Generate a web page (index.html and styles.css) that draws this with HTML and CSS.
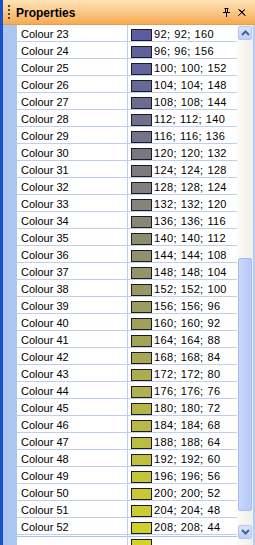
FILE: index.html
```html
<!DOCTYPE html>
<html>
<head>
<meta charset="utf-8">
<link rel="stylesheet" href="styles.css">
</head>
<body>
<div class="panel">
  <div class="titlebar">
    <span class="grip"></span>
    <span class="title">Properties</span>
    <svg class="pin" width="7" height="9" viewBox="0 0 7 9"><path d="M1.5 0.5h4M2.5 0.5v4M4.5 0.5v4M0 4.5h7M3.5 4.5v4.5" stroke="#000" stroke-width="1" fill="none"/><rect x="2" y="0" width="1" height="5" fill="#000"/></svg>
    <svg class="close" width="8" height="7" viewBox="0 0 8 7"><path d="M0.5 0.5l6.5 6M1.5 0.5l6 6M7 0.5l-6.5 6M6.5 0.5l-6 6" stroke="#000" stroke-width="1" fill="none"/></svg>
  </div>
  <div class="body">
    <div class="grid" id="grid"></div>
    <div class="scrollbar">
      <div class="sbtn up"><svg width="9" height="6" viewBox="0 0 9 6"><path d="M1 5L4.5 1.5L8 5" stroke="#4d6185" stroke-width="2" fill="none"/></svg></div>
      <div class="track"><div class="thumb"></div></div>
      <div class="sbtn down"><svg width="9" height="6" viewBox="0 0 9 6"><path d="M1 1L4.5 4.5L8 1" stroke="#4d6185" stroke-width="2" fill="none"/></svg></div>
    </div>
  </div>
</div>
<script src="app.js"></script>
</body>
</html>
```

FILE: app.js
```js
var g = document.getElementById('grid');
var html = '';
for (var n = 23; n <= 52; n++) {
  var k = n - 23;
  var r = 92 + 4 * k, b = 160 - 4 * k;
  html += '<div class="row"><div class="margin"></div><div class="name">Colour ' + n + '</div><div class="value"><span class="swatch" style="background: rgb(' + r + ',' + r + ',' + b + ')"></span><span class="vtext">' + r + '; ' + r + '; ' + b + '</span></div></div>';
}
html += '<div class="row partial"><div class="margin"></div><div class="name"></div><div class="value"><span class="swatch" style="background: rgb(212,212,40)"></span></div></div>';
g.innerHTML = html;
```

FILE: styles.css
```css
html, body {
  margin: 0;
  padding: 0;
  width: 255px;
  height: 545px;
  overflow: hidden;
  background: #fff;
}
.panel {
  width: 255px;
  height: 545px;
  display: flex;
  flex-direction: column;
  border-left: 3px solid #1c50c8;
  box-sizing: border-box;
  font-family: "Liberation Sans", Arial, sans-serif;
  font-size: 11px;
  color: #000;
}
.titlebar {
  height: 25px;
  flex: none;
  display: flex;
  align-items: center;
  background: linear-gradient(to bottom, #fde4b8 0%, #fbca8c 45%, #f6ab52 100%);
  border-bottom: 1px solid #e39c50;
  box-sizing: border-box;
}
.grip {
  width: 2px;
  height: 14px;
  margin-left: 5px;
  margin-right: 6px;
  background: repeating-linear-gradient(to bottom, #5a4a2e 0 2px, transparent 2px 4px);
}
.title {
  font-weight: bold;
  font-size: 12px;
  flex: 1;
  padding-top: 1px;
  color: #000;
}
.pin { margin-right: 8px; }
.close { margin-right: 9px; }
.body {
  flex: 1;
  display: flex;
  min-height: 0;
  border-right: 2px solid #b6c9ee;
}
.grid {
  flex: 1;
  overflow: hidden;
  background: #fff;
}
.row {
  display: flex;
  height: 17px;
}
.margin {
  width: 14px;
  flex: none;
  background: #a9c7f1;
}
.name {
  width: 106px;
  flex: none;
  padding-left: 4px;
  border-right: 1px solid #c0cfe8;
  border-bottom: 1px solid #c0cfe8;
  line-height: 17px;
  padding-top: 1px;
  height: 15px;
  overflow: hidden;
  white-space: nowrap;
}
.value {
  flex: 1;
  display: flex;
  align-items: flex-start;
  border-bottom: 1px solid #c0cfe8;
  height: 16px;
  white-space: nowrap;
}
.swatch {
  width: 19px;
  height: 10px;
  border: 1px solid #1a1a2a;
  margin-left: 3px;
  margin-top: 4px;
  flex: none;
}
.vtext {
  margin-left: 2px;
  line-height: 17px;
  padding-top: 1px;
  letter-spacing: 0.35px;
  word-spacing: 0.5px;
}
.row.partial {
  box-shadow: inset 0 3px 0 -2px #fff, inset 0 4px 0 -2px #a9c3ec;
}
.scrollbar {
  width: 16px;
  flex: none;
  display: flex;
  flex-direction: column;
  background: linear-gradient(to right, #fbfbf7, #f1efe6);
  padding: 1px 0 6px 1px;
  box-sizing: border-box;
}
.sbtn {
  height: 14px;
  width: 14px;
  flex: none;
  border: 1px solid #b4c7f2;
  border-radius: 2px;
  background: linear-gradient(to bottom, #dae5fd, #bccffa);
  box-sizing: border-box;
  display: flex;
  align-items: center;
  justify-content: center;
}
.sbtn.down { margin-top: 2px; }
.track {
  flex: 1;
  position: relative;
}
.thumb {
  position: absolute;
  left: 0;
  width: 14px;
  top: 218px;
  bottom: 12px;
  box-sizing: border-box;
  border: 1px solid #a7bdef;
  border-radius: 2px;
  background: linear-gradient(to right, #c9d8fc, #b6caf7);
}
```
